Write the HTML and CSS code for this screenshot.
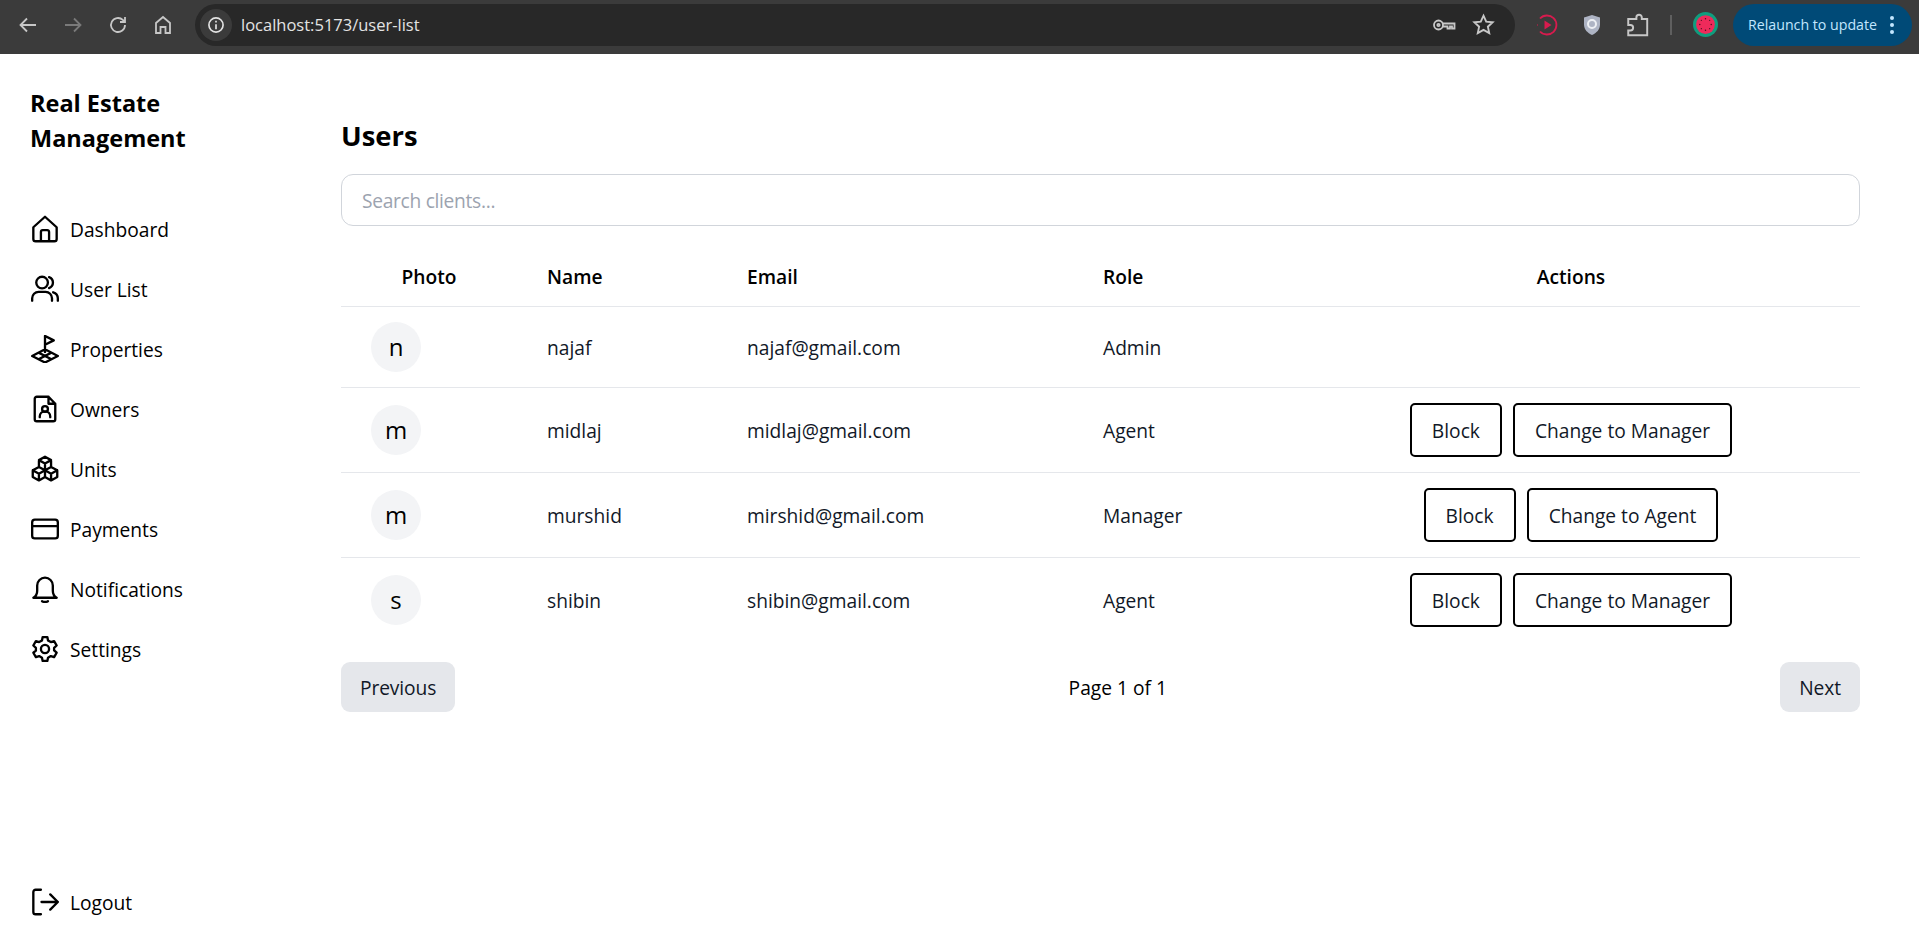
FILE: index.html
```html
<!DOCTYPE html>
<html lang="en">
<head>
<meta charset="utf-8">
<title>Real Estate Management</title>
<link rel="stylesheet" href="styles.css">
</head>
<body>
<header class="chrome">
  <div class="nav-btns">
    <svg class="cicon" viewBox="0 0 24 24"><path d="M20 12H5M11 5.500 4.500 12l6.500 6.500"/></svg>
    <svg class="cicon dim" viewBox="0 0 24 24"><path d="M4 12h15M13 5.500l6.500 6.500-6.500 6.500"/></svg>
    <svg class="cicon" viewBox="0 0 24 24"><path d="M19 12a7 7 0 1 1-2.200-5.100L19 9M19 4v5h-5"/></svg>
    <svg class="cicon" viewBox="0 0 24 24"><path d="M5 20V10l7-6 7 6v10h-4.500v-6h-5v6z"/></svg>
  </div>
  <div class="omnibox">
    <span class="site-info"><svg viewBox="0 0 24 24"><circle cx="12" cy="12" r="8.500"/><path d="M12 11v6M12 7v2"/></svg></span>
    <span class="url">localhost:5173/user-list</span>
    <svg class="cicon key" viewBox="0 0 24 24"><circle cx="6.500" cy="12" r="4.500"/><circle cx="6.500" cy="12" r="1.200"/><path d="M11 10.500h11.500v5h-2.500v-2h-2v2h-2.500v-2H11"/></svg>
    <svg class="cicon star" viewBox="0 0 24 24"><path d="m12 3.500 2.600 5.700 6.200.7-4.600 4.200 1.300 6.100-5.500-3.100-5.500 3.100 1.300-6.100-4.600-4.200 6.200-.7z"/></svg>
  </div>
  <div class="extensions">
    <svg class="ext" viewBox="0 0 24 24"><path class="rec" d="M5 5.500a9.500 9.500 0 1 1 0 13"/><path class="rec" d="M2.500 12h.5"/><path class="play" d="M9.500 7.500v9l7-4.500z"/></svg>
    <svg class="ext" viewBox="0 0 24 24"><path class="shield" d="M12 2l8 2.500v7c0 5-3.500 8.500-8 10.500-4.500-2-8-5.500-8-10.500v-7z"/><circle class="shield-eye" cx="12" cy="11" r="4"/></svg>
    <svg class="cicon puzzle" viewBox="0 0 24 24"><path d="M7 6.500h3.500V5a2.500 2.500 0 0 1 5 0v1.500h5v15H3v-4.500h2a2.500 2.500 0 0 0 0-5H3V6.500z"/></svg>
    <span class="divider"></span>
    <svg class="melon" viewBox="0 0 24 24"><circle cx="12" cy="12" r="12" fill="#0f9d7e"/><circle cx="12" cy="12" r="9" fill="#ee2a5b"/><circle cx="12" cy="6.500" r=".7" fill="#40121e"/><circle cx="17.500" cy="12" r=".7" fill="#40121e"/><circle cx="12" cy="17.500" r=".7" fill="#40121e"/><circle cx="6.500" cy="12" r=".7" fill="#40121e"/><circle cx="8" cy="8" r=".6" fill="#40121e"/><circle cx="16" cy="8" r=".6" fill="#40121e"/><circle cx="8" cy="16" r=".6" fill="#40121e"/><circle cx="16" cy="16" r=".6" fill="#40121e"/></svg>
  </div>
  <div class="relaunch"><span>Relaunch to update</span><span class="dots"><i></i><i></i><i></i></span></div>
</header>

<div class="app">
  <aside class="sidebar">
    <h1 class="brand">Real Estate Management</h1>
    <nav class="menu">
      <a class="menu-item"><svg class="micon" viewBox="0 0 24 24"><path d="M2 10.500 12 1.500l10 9v10a2 2 0 0 1-2 2H4a2 2 0 0 1-2-2z"/><path d="M8.500 22v-7.500a1.500 1.500 0 0 1 1.500-1.500h4a1.500 1.500 0 0 1 1.500 1.500V22"/></svg>Dashboard</a>
      <a class="menu-item"><svg class="micon" viewBox="0 0 24 24"><circle cx="9.500" cy="6.500" r="5"/><path d="M1 22v-2a5.500 5.500 0 0 1 5.500-5.500h6A5.500 5.500 0 0 1 18 20v2M15.500 1.800a5 5 0 0 1 0 9.400M19 14.800a5.500 5.500 0 0 1 4 5.200v2"/></svg>User List</a>
      <a class="menu-item"><svg class="micon" viewBox="0 0 24 24"><path d="M12 14.500V.8l7.500 3.800L12 8.400M12 12.200 23 18l-11 5.600L1 18zM6.500 15.100 17.500 20.800M17.500 15.100 6.500 20.800"/></svg>Properties</a>
      <a class="menu-item"><svg class="micon" viewBox="0 0 24 24"><path d="M15 1.500H5A1.800 1.800 0 0 0 3.200 3.300v17.400A1.800 1.800 0 0 0 5 22.500h14a1.800 1.800 0 0 0 1.800-1.800V7.500zM15 1.500v6h5.800"/><circle cx="12" cy="12" r="2.500"/><path d="M7.500 19v-.5a4.500 4.500 0 0 1 9 0v.5"/></svg>Owners</a>
      <a class="menu-item"><svg class="micon" viewBox="0 0 24 24"><path d="m12 1.500 5.200 2.900v5.800L12 13.100l-5.200-2.900V4.400zM6.800 10.200l5.200 2.900v5.800l-5.200 2.900-5.300-2.900v-5.800zM17.200 10.200l5.300 2.900v5.800l-5.300 2.900-5.200-2.900v-5.800zM6.800 4.400 12 7.300l5.200-2.900M12 7.300v5.800M1.500 13.100l5.300 2.900 5.200-2.900 5.200 2.900 5.300-2.900M6.800 16v5.800M17.200 16v5.800"/></svg>Units</a>
      <a class="menu-item"><svg class="micon" viewBox="0 0 24 24"><rect x="1" y="4" width="22" height="16" rx="2.300"/><path d="M1 9.500h22"/></svg>Payments</a>
      <a class="menu-item"><svg class="micon" viewBox="0 0 24 24"><path d="M2 19.500c1.800-1 3.300-2.500 3.300-6V9a6.700 6.700 0 0 1 13.400 0v4.500c0 3.500 1.500 5 3.300 6zM9.500 22.500c1.200.8 3.800.8 5 0"/></svg>Notifications</a>
      <a class="menu-item"><svg class="micon" viewBox="0 0 24 24"><circle cx="12" cy="12" r="3.500"/><path d="M10 1.800 9.400 4.700 7 6.100 4.200 5.200 2 9l2.200 2v2.400L2 15.200 4.200 19l2.800-.9 2.400 1.400.6 2.700h4l.6-2.700 2.400-1.400 2.800.9 2.200-3.800-2.200-2V11L22 9l-2.200-3.800-2.800.9-2.400-1.400-.6-2.900z"/></svg>Settings</a>
    </nav>
    <a class="menu-item logout"><svg class="micon" viewBox="0 0 24 24"><path d="M8.500 1.500H4A2 2 0 0 0 2 3.500v17a2 2 0 0 0 2 2h4.500M9 12h14M16.500 5.500l6.500 6.500-6.500 6.500"/></svg>Logout</a>
  </aside>

  <main class="content">
    <h2 class="title">Users</h2>
    <input class="search" type="text" placeholder="Search clients...">
    <table class="users">
      <thead>
        <tr><th class="c-photo center">Photo</th><th class="c-name">Name</th><th class="c-email">Email</th><th class="c-role">Role</th><th class="c-actions center">Actions</th></tr>
      </thead>
      <tbody>
        <tr><td><span class="avatar">n</span></td><td class="txt">najaf</td><td class="txt">najaf@gmail.com</td><td class="txt">Admin</td><td></td></tr>
        <tr><td><span class="avatar">m</span></td><td class="txt">midlaj</td><td class="txt">midlaj@gmail.com</td><td class="txt">Agent</td><td class="center"><div class="actions"><button class="btn">Block</button><button class="btn">Change to Manager</button></div></td></tr>
        <tr><td><span class="avatar">m</span></td><td class="txt">murshid</td><td class="txt">mirshid@gmail.com</td><td class="txt">Manager</td><td class="center"><div class="actions"><button class="btn">Block</button><button class="btn">Change to Agent</button></div></td></tr>
        <tr><td><span class="avatar">s</span></td><td class="txt">shibin</td><td class="txt">shibin@gmail.com</td><td class="txt">Agent</td><td class="center"><div class="actions"><button class="btn">Block</button><button class="btn">Change to Manager</button></div></td></tr>
      </tbody>
    </table>
    <div class="pager">
      <button class="page-btn">Previous</button>
      <span>Page 1 of 1</span>
      <button class="page-btn">Next</button>
    </div>
  </main>
</div>
</body>
</html>
```

FILE: styles.css
```css
* { box-sizing: border-box; }
html, body { height: 100%; }
body {
  margin: 0;
  overflow: hidden;
  background: #fff;
  color: #000;
  font-family: "Open Sans", "Noto Sans", sans-serif;
  font-size: 19.2px;
  display: flex;
  flex-direction: column;
}

/* browser chrome */
.chrome {
  height: 54px;
  flex: none;
  background: #3b3b3b;
  display: flex;
  align-items: center;
  padding: 0 7px 5px 0;
}
.cicon { width: 24px; height: 24px; fill: none; stroke: #c7c7c7; stroke-width: 1.8; }
.cicon.dim { stroke: #7a7a7a; }
.nav-btns { display: flex; gap: 21px; padding-left: 16px; width: 195px; }
.omnibox {
  width: 1320px;
  height: 42px;
  background: #282828;
  border-radius: 21px;
  display: flex;
  align-items: center;
  padding: 0 19px 0 5px;
}
.site-info {
  width: 32px; height: 32px; border-radius: 50%;
  background: #3b3b3b;
  display: flex; align-items: center; justify-content: center;
}
.site-info svg { width: 20px; height: 20px; fill: none; stroke: #e3e3e3; stroke-width: 2; }
.url { margin-left: 9px; flex: 1; color: #e3e3e3; font-size: 16.500px; }
.key { margin-right: 15px; }
.star { width: 25px; height: 25px; }
.extensions { display: flex; align-items: center; margin-left: 20px; gap: 21px; width: 198px; }
.ext { width: 24px; height: 24px; flex: none; }
.rec { fill: none; stroke: #d81b4e; stroke-width: 1.800; }
.play { fill: #d81b4e; }
.shield { fill: #aeb4c4; }
.shield-eye { fill: none; stroke: #eef0f4; stroke-width: 2; }
.puzzle { width: 26px; height: 26px; flex: none; }
.divider { width: 2px; height: 20px; background: #5f5f5f; flex: none; margin: 0 0 0 -2px; }
.melon { width: 25px; height: 25px; flex: none; }
.relaunch {
  width: 179px;
  height: 42px;
  border-radius: 21px;
  background: #004a77;
  color: #c2e7ff;
  font-size: 14.200px;
  display: flex;
  align-items: center;
  padding-left: 15px;
  gap: 13px;
  white-space: nowrap;
}
.dots { display: flex; flex-direction: column; gap: 3px; }
.dots i { display: block; width: 4px; height: 4px; border-radius: 50%; background: #c2e7ff; }

/* layout */
.app { flex: 1; display: flex; min-height: 0; }
.sidebar {
  width: 341px;
  flex: none;
  padding: 32px 0 20px 30px;
  display: flex;
  flex-direction: column;
}
.brand { margin: 0 130px 0 0; font-size: 23.500px; line-height: 35px; font-weight: 700; }
.menu { margin-top: 43px; display: flex; flex-direction: column; }
.menu-item {
  height: 60px;
  display: flex;
  align-items: center;
  gap: 12px;
  font-weight: 500;
}
.micon { width: 28px; height: 28px; flex: none; margin-left: 1px; margin-right: -1px; fill: none; stroke: #000; stroke-width: 2; stroke-linejoin: round; stroke-linecap: round; }
.logout { margin-top: auto; }

.content { width: 1519px; flex: none; padding-top: 64px; }
.title { margin: 0; font-size: 27.400px; line-height: 36px; font-weight: 700; }
.search {
  display: block;
  width: 100%;
  height: 52px;
  margin-top: 20px;
  padding: 0 20px;
  border: 1px solid #d1d5db;
  border-radius: 12px;
  font: inherit;
  letter-spacing: -.3px;
  outline: none;
}
.search::placeholder { color: #9ca3af; }

.users { width: 100%; margin-top: 20px; border-collapse: collapse; table-layout: fixed; }
.users th { height: 60px; padding: 2px 30px 0; text-align: left; font-weight: 600; border-bottom: 1px solid #e5e7eb; }
.users th.center, .users td.center { text-align: center; }
.users td { padding: 0 30px; border-bottom: 1px solid #e5e7eb; height: 85px; color: #111827; }
.users td.txt { padding-top: 2px; }
.users tbody tr:first-child td { height: 81px; }
.users tbody tr:last-child td { border-bottom: 0; }
.c-photo { width: 176px; }
.c-name { width: 200px; }
.c-email { width: 356px; }
.c-role { width: 209px; }
.avatar {
  width: 50px; height: 50px; border-radius: 50%;
  background: #f3f4f6;
  display: flex; align-items: center; justify-content: center;
  font-size: 24px; font-weight: 500;
  color: #000;
}
.actions { display: flex; justify-content: center; gap: 11px; }
.btn {
  height: 54px;
  padding: 2px 20px 0;
  background: #fff;
  border: 2px solid #000;
  border-radius: 5px;
  font: inherit;
  color: #111827;
}
.pager { display: flex; justify-content: space-between; align-items: center; margin-top: 20px; }
.page-btn {
  height: 50px;
  padding: 0 19px;
  border: 0;
  border-radius: 9px;
  background: #e5e7eb;
  font: inherit;
  letter-spacing: -.1px;
  color: #111827;
}
```
